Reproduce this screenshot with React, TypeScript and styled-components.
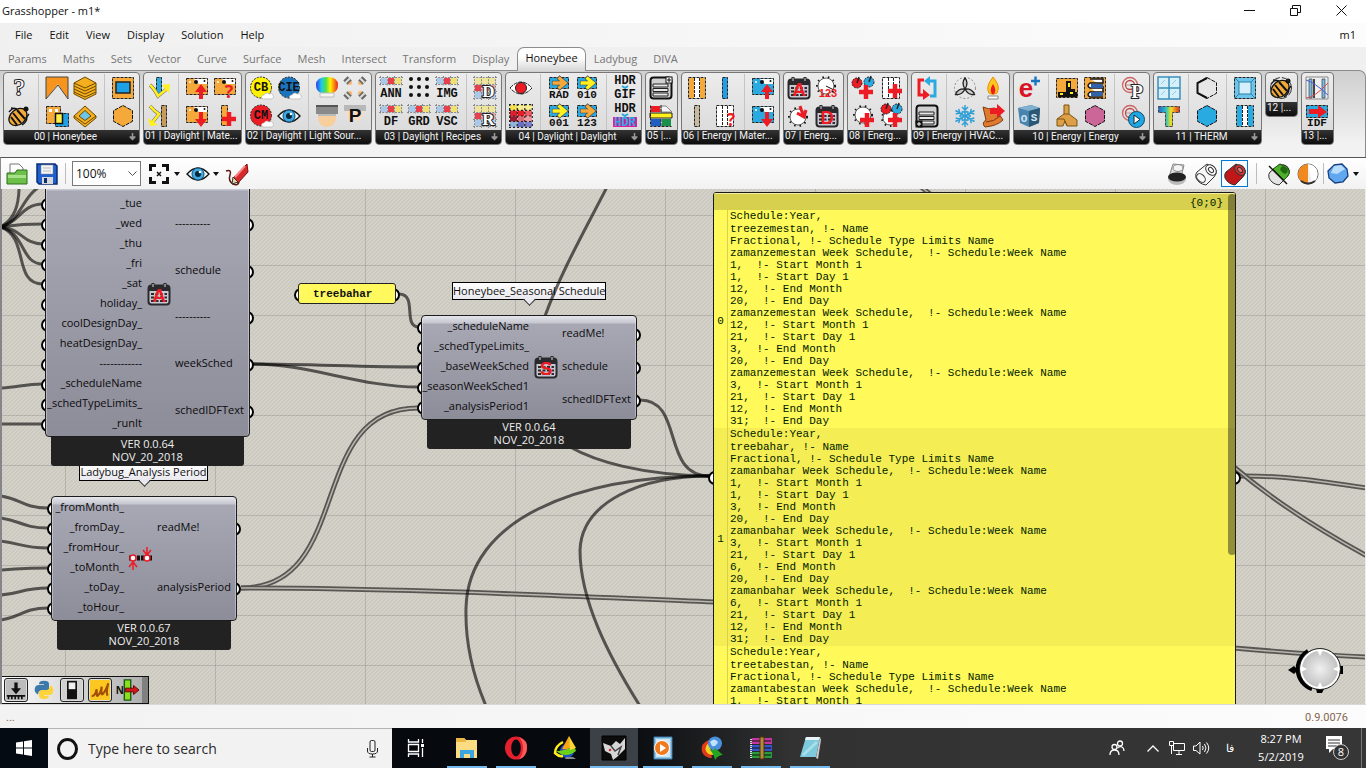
import React from "react";
import type { ReactNode } from "react";
import styled, { createGlobalStyle, css } from "styled-components";

const UI = `"Open Sans", "Noto Sans", sans-serif`;
const MONO = `"Liberation Mono", monospace`;

const Global = createGlobalStyle`
  * { box-sizing: border-box; }
  body { margin: 0; background: #f0f0f0; font-family: ${UI}; }
  button, select, input { font-family: inherit; margin: 0; padding: 0; border: 0; background: none; color: inherit; }
  button { cursor: default; }
  svg { display: block; flex: none; overflow: visible; }
`;

/* ---------- icon building blocks ---------- */

const dash = { stroke: "#222", strokeWidth: 1, strokeDasharray: "3 1" };

const Glyph = ({ size = 24, children }: { size?: number; children: ReactNode }) => (
  <svg width={size} height={size} viewBox="0 0 24 24" fill="none" aria-hidden="true">
    {children}
  </svg>
);

const Txt = ({ x = 12, y, s = 12, f = "#111", o, font = MONO, w = 700, children }: any) => (
  <text x={x} y={y} fontSize={s} fontWeight={w} fontFamily={font} textAnchor="middle" fill={f}
    stroke={o} strokeWidth={o ? 2 : 0} paintOrder="stroke">{children}</text>
);

const Film = ({ c, children }: { c: string; children?: ReactNode }) => (
  <>
    <rect x="1.5" y="2.5" width="21" height="16" fill={c} {...dash} />
    <path d="M9 3h13v5h-8l-3-2z" fill="#fff" />
    <circle cx="11" cy="6" r="2" fill="#111" />
    <circle cx="19.500" cy="5" r="1" fill="#111" />
    <circle cx="5" cy="6" r="1" fill="#fff" />
    {children}
  </>
);

const RedUp = () => <path d="M14 23v-7h-4l6-8 6 8h-4v7z" fill="#ed1c24" />;
const RedDown = () => <path d="M14 8v7h-4l6 8 6-8h-4V8z" fill="#ed1c24" />;
const Plus = ({ x = 16, y = 16 }) => (
  <path d={`M${x - 7} ${y}h14M${x} ${y - 7}v14`} stroke="#ed1c24" strokeWidth="4.500" />
);

const Gear = ({ x = 11, y = 12, r = 8 }) => (
  <>
    <circle cx={x} cy={y} r={r + 1} stroke="#111" strokeWidth="2" strokeDasharray="1.500 4" />
    <circle cx={x} cy={y} r={r} fill="#fff" stroke="#333" strokeWidth=".8" />
  </>
);

const Strip = () => (
  <>
    <rect x="2" y="2" width="6" height="6" fill="#a9c8ea" />
    <rect x="9" y="2" width="6" height="6" fill="#e8404a" />
    <rect x="16" y="2" width="6" height="6" fill="#f0e070" />
    <path d="M0 1.500h24M0 8.500h24M1.500 0v10M8.500 0v10M15.500 0v10M22.500 0v10" stroke="#888" strokeDasharray="2 1.200" />
  </>
);
const StripText = ({ t }: { t: string }) => <><Strip /><Txt y="21">{t}</Txt></>;

const Cal = ({ t }: { t: string }) => (
  <>
    <rect x="1.500" y="3.500" width="21" height="19" rx="3" fill="#c8c8d2" stroke="#2a2a2e" strokeWidth="2" />
    <path d="M2 4h20v5H2z" fill="#2a2a2e" />
    <path d="M6 1v5M18 1v5" stroke="#2a2a2e" strokeWidth="3" />
    <path d="M6 2v3M18 2v3" stroke="#ddd" />
    <path d="M4 12h16M4 15.500h16M4 19h16" stroke="#2a2a2e" strokeWidth="2" strokeDasharray="3 1.500" />
    <Txt y="20" s={19} f="#ed1c24" font={`"Liberation Sans", sans-serif`}>{t}</Txt>
  </>
);

const Mesh = ({ t }: { t: string }) => (
  <>
    <rect x="2" y="2" width="20" height="6" fill="#efe59a" />
    <rect x="2" y="9" width="6" height="6" fill="#e8404a" />
    <rect x="9" y="9" width="13" height="6" fill="#f0a0a0" />
    <rect x="2" y="16" width="20" height="6" fill="#a9c8ea" />
    <path d="M0 1.500h24M0 8.500h24M0 15.500h24M0 22.500h24M1.500 0v24M8.500 0v24M15.500 0v24M22.500 0v24" stroke="#888" strokeDasharray="2 1.200" />
    <Txt x="15.500" y="21" s={17} f="#fff" o="#222" font={`"Liberation Serif", serif`}>{t}</Txt>
  </>
);

const Arrow = ({ c, t }: { c: string; t: string }) => (
  <>
    <rect x="2.500" y="1.500" width="19" height="11" fill="#29abe2" {...dash} />
    <path d="M5 7h11M11 1l7 6-7 6" stroke="#444" strokeWidth="4.500" />
    <path d="M5.500 7h11M11.500 1.500l6.500 5.500-6.500 5.500" stroke={c} strokeWidth="3.400" />
    <Txt y="22" s={11}>{t}</Txt>
  </>
);

const Ball = ({ x, y, c }: { x: number; y: number; c: string }) => (
  <>
    <circle cx={x} cy={y} r="5" fill={c} stroke="#222" strokeDasharray="2 1" />
    <path d={`M${x} ${y}l2-6`} stroke="#222" strokeWidth="1.500" />
  </>
);

const Hex = ({ c, s = "#111" }: { c: string; s?: string }) => (
  <path d="M12 1.500l9.500 5.200v10.600l-9.500 5.200-9.500-5.200V6.700z" fill={c} stroke={s} strokeDasharray="4 1" />
);

const Badge = ({ c, t, tc = "#111" }: { c: string; t: string; tc?: string }) => (
  <>
    <circle cx="12" cy="11.500" r="10.500" fill={c} stroke="#222" strokeDasharray="2 1.200" />
    <Txt y="15" s={12} f={tc}>{t}</Txt>
    <path d="M14 23a2 2 0 0 1 1-4 3 3 0 0 1 5-1 2.500 2.500 0 0 1 3 5z" fill="#fff" stroke="#aaa" strokeWidth=".6" />
  </>
);

const Bee = ({ c = "#f0a838" }) => (
  <>
    <ellipse cx="11" cy="13" rx="10" ry="7.500" transform="rotate(-40 11 13)" fill={c} stroke="#111" strokeWidth="1.300" />
    <path d="M4 13l6 8M6 9l8 10M10 6l8 9" stroke="#111" strokeWidth="2" />
    <path d="M2 8q4-5 8-3M15 21q5-3 5-8M4 4l6 1M22 10l-3 4" stroke="#111" strokeWidth="1.300" />
    <circle cx="19" cy="5" r="2.500" fill="#111" />
  </>
);

const EyeBlue = () => (
  <>
    <path d="M1 12Q12 0 23 12 12 24 1 12z" fill="#e9f6fc" stroke="#111" strokeWidth="1.300" />
    <circle cx="12" cy="12" r="6" fill="#3fa9e0" stroke="#14527a" />
    <circle cx="12" cy="12" r="3" fill="#06283f" />
    <circle cx="14" cy="10" r="1.300" fill="#fff" />
  </>
);

const List = ({ low }: { low?: boolean }) => (
  <>
    <rect x="1.500" y="1.500" width="21" height="21" rx="3" fill="#d0d0d0" stroke="#111" strokeWidth="2" />
    <path d="M4 8h15v3H4zM4 12.500h15v3H4zM4 17h15v3H4z" fill="#e8e8e8" stroke="#222" />
    <rect x={low ? 1 : 17} y={low ? 17 : 1} width="6" height="6" fill={low ? "#111" : "#fff"} stroke="#111" />
    <path d={low ? "M4 18v4M2 20h4" : "M20 2v4M18 4h4"} stroke={low ? "#fff" : "#111"} />
  </>
);

const Bars = ({ a, b }: { a: string; b: string }) => (
  <>
    <rect x="3.500" y="1.500" width="17" height="21" fill={b} {...dash} />
    <rect x="4" y="2" width="5" height="20" fill={a} />
    <rect x="15" y="2" width="5" height="20" fill={a} />
    <path d="M9.500 2v20M14.500 2v20" {...dash} />
  </>
);

const Coil = () => (
  <>
    <circle cx="9" cy="9" r="7.500" stroke="#c66" strokeWidth="1.300" />
    <circle cx="9" cy="9" r="4.500" stroke="#b44" strokeWidth="1.300" />
    <path d="M5 9h9l3 6" stroke="#caa" strokeWidth="1.500" />
  </>
);

const icons: Record<string, ReactNode> = {
  help: <Txt y="19" s={24} w={400} f="#fff" o="#222" font={`"Liberation Serif", serif`}>?</Txt>,
  bee: <Bee />,
  roof: <><path d="M1 1h22v22L13 8 1 23z" fill="#f7941e" /><path d="M1 23L13 9l10 14z" fill="#e4e4e4" /><path d="M1 23V1h22v22L13 9z" stroke="#444" /></>,
  overlap: <><rect x="1.500" y="2.500" width="14" height="17" fill="#f5a93a" {...dash} /><path d="M4 5h3v3H4zM10 5h3v3h-3z" fill="#fff" /><rect x="10.500" y="9.500" width="13" height="13" fill="#1ea0e6" {...dash} /><rect x="10.500" y="9.500" width="7" height="10" fill="#fff04a" stroke="#111" strokeWidth="1.500" /></>,
  layers: <><path d="M1 7l11-6 11 6v11l-11 5.500L1 18z" fill="#f4ae1e" stroke="#6b4a00" /><path d="M1 7l11 5 11-5M1 10l11 5 11-5M1 13l11 5 11-5M1 16l11 5 11-5" stroke="#6b4a00" /></>,
  tile: <><path d="M1 12l11-10 11 10v2l-11 9-11-9z" fill="#f4ae1e" stroke="#6b4a00" /><path d="M1 12l11 8 11-8" stroke="#6b4a00" /><path d="M6 12l6-5.500 6 5.500-6 4.500z" fill="#6cc5ea" stroke="#6b4a00" /></>,
  frame: <><rect x="1.500" y="1.500" width="21" height="21" fill="#f5a93a" {...dash} /><rect x="5" y="6" width="14" height="11" fill="#1ea0e6" stroke="#222" strokeWidth="1.500" /></>,
  hexOrange: <Hex c="#f5a93a" />,
  rays: <><rect x="9.500" y="1.500" width="5" height="17" fill="#29abe2" {...dash} /><path d="M3 9q4 3 8 11l10-8" stroke="#666" strokeWidth="3.500" /><path d="M3 9q4 3 8 11l10-8" stroke="#fff01e" strokeWidth="2.600" /><path d="M15 9l8-1-1 9z" fill="#fff01e" /></>,
  bounce: <><rect x="14.500" y="1.500" width="5" height="21" fill="#c79a5b" {...dash} /><path d="M3 2q4 5 9 8L4 20" stroke="#666" strokeWidth="3.500" /><path d="M3 2q4 5 9 8L4 20" stroke="#fff01e" strokeWidth="2.600" /><path d="M1 14l2 8 8-1z" fill="#fff01e" /></>,
  filmUp: <Film c="#f5a93a"><RedUp /></Film>,
  filmDown: <Film c="#f5a93a"><RedDown /></Film>,
  filmAsk: <Film c="#f5a93a"><Txt x="16" y="22" s={18} f="#ed1c24" font={UI}>?</Txt></Film>,
  barPlus: <><rect x="8.500" y="1.500" width="6" height="20" fill="#f5a93a" {...dash} /><Plus x={16} y={15} /></>,
  cb: <Badge c="#fff200" t="CB" />,
  cm: <Badge c="#ed1c24" t="CM" />,
  cie: <Badge c="#1c75bc" t="CIE" />,
  eye: <EyeBlue />,
  rainbow: <><defs><linearGradient id="rb"><stop offset="0" stopColor="#2a3cf0" /><stop offset=".25" stopColor="#20c8e8" /><stop offset=".45" stopColor="#4be04b" /><stop offset=".65" stopColor="#fff200" /><stop offset="1" stopColor="#f01e1e" /></linearGradient></defs><path d="M1 9q0-8 11-8t11 8q0 6-5 8H6Q1 15 1 9z" fill="url(#rb)" /><path d="M5 17h14v4H5z" fill="#f4f4f4" stroke="#bbb" /></>,
  cap: <><path d="M1 1h22v9H1z" fill="#8a8a8a" /><path d="M1 1h22v2H1z" fill="#555" /><path d="M3 10h18v2H3z" fill="#bbb" /><path d="M3 12h18q0 11-9 11T3 12z" fill="#f8ce9c" /></>,
  spots: <>{[[6, 6, 45], [18, 6, 135], [6, 18, -45], [18, 18, 225]].map(([x, y, a]) => <g key={`${x}${y}`} transform={`translate(${x} ${y}) rotate(${a})`}><rect x="-5" y="-3" width="6" height="6" fill="#666" /><rect x="-3" y="-3" width="2" height="6" fill="#ddd" /><path d="M1-3q5 3 0 6z" fill="#f9b872" /></g>)}</>,
  lampP: <><path d="M1 1h22v6H1z" fill="#b8b8b8" /><path d="M3 7h18q-1 10-9 10T3 7z" fill="#f8dcc0" /><Txt x="12" y="18" s={19} font={`"Liberation Sans", sans-serif`}>P</Txt></>,
  ann: <StripText t="ANN" />, df: <StripText t="DF" />, grd: <StripText t="GRD" />, img: <StripText t="IMG" />, vsc: <StripText t="VSC" />,
  dots: <>{[3, 11, 19].map((y) => [4, 12, 20].map((x) => <circle key={`${x}${y}`} cx={x} cy={y} r="2" fill="#111" />))}</>,
  meshD: <Mesh t="D" />, meshR: <Mesh t="R" />,
  redEye: <><path d="M1 12Q12 0 23 12 12 24 1 12z" fill="#fff" stroke="#222" strokeDasharray="4 1" /><circle cx="12" cy="12" r="5.500" fill="#ed1c24" stroke="#222" /></>,
  grid: <>{["#f3e04a", "#f6ee8c", "#f6ee8c", "#e01e2c", "#ed1c24", "#ee5a62", "#a01830", "#e06a74", "#f09aa0", "#8fb4e0", "#6a70c0", "#7a80cc"].map((c, i) => <rect key={i} x={1 + (i % 3) * 7.5} y={1 + Math.floor(i / 3) * 5.6} width="7" height="5.400" fill={c} />)}<path d="M.700 0v24M8.300 0v24M15.800 0v24M23.300 0v24M0 .700h24M0 6.300h24M0 12h24M0 17.500h24M0 23.300h24" stroke="#222" strokeDasharray="2 2" strokeWidth="1.200" /></>,
  rad: <Arrow c="#f5a93a" t="RAD" />, n001: <Arrow c="#fff01e" t="001" />, n010: <Arrow c="#fff01e" t="010" />, n123: <Arrow c="#f5a93a" t="123" />,
  hdrGif: <><Txt y="8" s={12}>HDR</Txt><path d="M9 10l3 2 3-2" stroke="#29abe2" strokeWidth="2" /><Txt y="22" s={12}>GIF</Txt></>,
  hdrHdr: <><Txt y="8" s={12}>HDR</Txt><path d="M9 10l3 2 3-2" stroke="#29abe2" strokeWidth="2" /><path d="M0 13h24v10H0z" fill="#d6249c" /><Txt y="22" s={12} f="#29abe2">HDR</Txt></>,
  list: <List />,
  listPlus: <List low />,
  blocks: <><path d="M2 2h9v6H2z" fill="#ed1c24" /><path d="M12 2h5l6 6H12z" fill="#f4f4f4" stroke="#888" /><path d="M1 9h22v5H1z" fill="#fff01e" stroke="#222" /><path d="M2 15h10v7H2z" fill="#1c5fc0" /><path d="M13 15h9v7h-9z" fill="#18904a" /><path d="M1.500 1.500v21h21M12 1v7M12 15v7" {...dash} /></>,
  wall: <Bars a="#f5a93a" b="#fff" />,
  tanBar: <rect x="9.500" y="1.500" width="5" height="21" fill="#c8ba9c" {...dash} />,
  blueBar: <rect x="9.500" y="1.500" width="5" height="21" fill="#1ea0e6" {...dash} />,
  wallAsk: <><Bars a="#fff" b="#fff" /><Txt x="18" y="22" s={17} f="#ed1c24" font={UI}>?</Txt></>,
  blueUp: <Film c="#29abe2"><RedUp /></Film>,
  blueDown: <Film c="#29abe2"><RedDown /></Film>,
  calA: <Cal t="A" />, calD: <Cal t="D" />, calS: <Cal t="S" />,
  gearNum: <><Gear y={10} /><path d="M11 10l8 4" stroke="#111" /><Txt x="13" y="21" s={11} f="#ed1c24" font={`"Liberation Sans", sans-serif`}>123</Txt></>,
  gearDown: <><Gear y={13} /><path d="M13 2l3 9M10 9l7 4 2-7" stroke="#ed1c24" strokeWidth="3" /></>,
  balls: <><Ball x={6} y={7} c="#ed1c24" /><Ball x={18} y={6} c="#29abe2" /><Plus x={15} y={16} /></>,
  gearPlus: <><Gear x={12} y={11} r={8} /><Plus x={16} y={16} /></>,
  wallPlus: <><Bars a="#fff" b="#fff" /><Plus x={16} y={15} /></>,
  ballsGear: <><Gear x={11} y={14} r={7} /><Ball x={7} y={5} c="#ed1c24" /><Ball x={18} y={5} c="#29abe2" /><Plus x={16} y={16} /></>,
  cycle: <><path d="M9 4H4v15h6" stroke="#ed1c24" strokeWidth="3" /><path d="M8 13l7 6-7 5z" fill="#ed1c24" /><path d="M15 20h5V5h-5" stroke="#29abe2" strokeWidth="3" /><path d="M15 0v10L9 5z" fill="#29abe2" /></>,
  fan: <><circle cx="12" cy="12" r="10.500" stroke="#888" strokeDasharray="2 2" />{[0, 120, 240].map((a) => <path key={a} d="M12 13q-4-6 0-11 4 5 0 11z" transform={`rotate(${a} 12 13)`} fill="#ccc" stroke="#222" strokeWidth="1.300" />)}</>,
  snow: <>{[0, 60, 120].map((a) => <path key={a} d="M12 1v22M9 3l3 3 3-3M9 21l3-3 3 3M9.500 7l2.500 2 2.500-2M9.500 17l2.500-2 2.500 2" transform={`rotate(${a} 12 12)`} stroke="#2f9fd6" strokeWidth="1.500" />)}</>,
  flame: <><path d="M12 1q8 9 4 16-4 3-8 0Q4 11 12 1z" fill="#fdc81e" stroke="#f08a00" /><path d="M12 8q4 6 1 10h-2q-3-4 1-10z" fill="#ed1c24" /><path d="M7 20h10v3H7z" fill="#fff" stroke="#888" /></>,
  roll: <><path d="M2 3q5 3 12 1l8 12q-6 6-18 7-4-4 1-7z" fill="#e07a2e" stroke="#7a3a10" /><path d="M5 18q8 0 14-6" stroke="#7a3a10" /><path d="M9 4h7V0l8 7-8 7v-4H9z" fill="#ed1c24" /></>,
  eplus: <><Txt x="9" y="21" s={26} f="#d81424" font={`"Liberation Sans", sans-serif`}>e</Txt><path d="M14 5h9M18.500.500v9" stroke="#1c75bc" strokeWidth="2.400" /></>,
  cube: <><path d="M1 4l13-3 9 3-1 15-10 4-9-4z" fill="#4a84ae" /><path d="M1 4l11 3 11-3-9-3z" fill="#7fb0d0" /><path d="M12 7v16l10-4 1-15z" fill="#2b5674" /><Txt x="7" y="18" s={11} f="#cfe6f4">O</Txt><Txt x="17" y="17" s={11} f="#cfe6f4">S</Txt></>,
  factory: <><path d="M1.500 2.500h21v19h-21z" fill="#f5a93a" {...dash} /><path d="M3 21v-5h8V5h5v8h4v3h2v5z" fill="#111" /><path d="M5 17h3v2H5zM13 7h2v4h-2zM15 16h3v2h-3z" fill="#fff01e" /></>,
  duct: <><path d="M9 1h5v9l8 6v6H12l-2-5-2 5H2v-7l7-5z" fill="#dea047" stroke="#7a5412" /><path d="M2 15h7l3 7M9 10h5" stroke="#7a5412" /></>,
  books: <><path d="M1.500 1.500h21v21h-21z" fill="#f5a93a" {...dash} /><path d="M7 3h13v4H7q-4 3 0 5h13v-2M7 12h13v4H7q-4 3 0 5h13" fill="#fff" stroke="#111" strokeWidth="1.500" /><path d="M8 8h12v4H8zM8 16h12v4H8z" fill="#2f62a8" /></>,
  hexPink: <Hex c="#cc6699" />,
  coilP: <><Coil /><Txt x="16" y="22" s={19} f="#fff" o="#222" font={`"Liberation Serif", serif`}>P</Txt></>,
  coilPlay: <><Coil /><circle cx="15.500" cy="15.500" r="8" fill="#1ea8e6" stroke="#114a66" /><path d="M13 11l6 4.500-6 4.500z" fill="#fff" stroke="#222" /></>,
  window: <><path d="M1 1h22v22H1z" fill="#d6f0fb" stroke="#3b8fb8" strokeWidth="1.500" /><path d="M12 1v22M1 12h22" stroke="#3b8fb8" strokeWidth="1.500" /><path d="M4 8l4-4M15 8l4-4M4 19l4-4M15 19l4-4" stroke="#8fcbe6" /></>,
  tee: <><defs><linearGradient id="tg"><stop offset="0" stopColor="#2a5fd0" /><stop offset=".35" stopColor="#27c0c0" /><stop offset=".6" stopColor="#f0e020" /><stop offset="1" stopColor="#e03020" /></linearGradient></defs><path d="M1.500 2.500h21v6h-7v14h-7v-14h-7z" fill="url(#tg)" stroke="#444" strokeDasharray="3 1" /></>,
  hexLine: <><Hex c="#e6e6e6" /><path d="M12 22L2.500 17V7L12 2" stroke="#111" strokeWidth="2" /></>,
  hexBlue: <Hex c="#29abe2" />,
  pane: <><rect x="1.500" y="1.500" width="21" height="21" fill="#6cc5ea" {...dash} /><path d="M6 6h12v12H6z" fill="#d6f0fb" stroke="#2b7fa8" /><path d="M2 2l4 4M22 2l-4 4M2 22l4-4M22 22l-4-4" stroke="#2b7fa8" /></>,
  blueBars: <Bars a="#29abe2" b="#fff" />,
  beeRing: <><Bee /><circle cx="12" cy="12" r="10.500" stroke="#333" strokeDasharray="8 2" /></>,
  chart: <><path d="M1 1h22v22H1z" fill="#eee" stroke="#888" /><path d="M4 3h3v19H4zM17 3h3v19h-3z" fill="#7db8dc" stroke="#345" strokeWidth=".7" /><path d="M8 3h2v19H8z" fill="#444" /><path d="M1 22q8 0 22-15" stroke="#d84a4a" /><path d="M1 4q8 2 22 15" stroke="#4a5ad8" /></>,
  idf: <><rect x="1.500" y="1.500" width="21" height="12" fill="#29abe2" {...dash} /><path d="M4 5h9V1l9 7-9 6v-4H4z" fill="#ed1c24" /><Txt y="22" s={11} w={700}>IDF</Txt></>,
};

/* ---------- window chrome ---------- */

const Page = styled.div`
  display: flex;
  flex-direction: column;
  min-height: 100vh;
  font-size: 11px;
  color: #111;
`;

const TitleBar = styled.header`
  display: flex;
  align-items: center;
  justify-content: space-between;
  height: 23px;
  padding-left: 2px;
  padding-bottom: 2px;
  background: #fff;
  h1 { margin: 0; font-size: 11px; font-weight: 400; }
`;
const WinButtons = styled.div`display: flex; padding-right: 2px;`;
const WinButton = styled.button`
  display: flex;
  align-items: center;
  justify-content: center;
  width: 46px;
  height: 21px;
`;

const MenuBar = styled.nav`
  display: flex;
  align-items: center;
  height: 24px;
  padding: 0 10px 2px 7px;
  background: linear-gradient(90deg, #f0f0f0, #fcfcfc);
`;
const MenuButton = styled.button`
  padding: 0 9px 0 8px;
  font-size: 11px;
  &:last-child { margin-left: auto; padding: 0; }
`;

const TabBar = styled.div`
  display: flex;
  align-items: stretch;
  height: 23px;
  background: #f0f0f0;
`;
const Tab = styled.button<{ $active?: boolean }>`
  position: relative;
  z-index: 1;
  height: 24px;
  padding: 0 8px 1px;
  font-size: 11px;
  color: #767676;
  ${(p) => p.$active && css`
    color: #111;
    padding: 0 7px 4px;
    border: 1px solid #8c8c8c;
    border-bottom: 0;
    border-radius: 7px 7px 0 0;
    background: linear-gradient(#fff 40%, #d6d6d6);
  `}
`;

const Ribbon = styled.section`
  display: flex;
  align-items: flex-start;
  gap: 3px;
  height: 87px;
  padding: 1px 3px 0;
  border-top: 1px solid #8c8c8c;
  border-right: 1px solid #8c8c8c;
  border-top-right-radius: 7px;
  background: linear-gradient(#cfcfcf, #f2f2f2 85%);
`;
const Group = styled.section`
  flex: none;
  border: 1px solid #777;
  border-radius: 4px;
  overflow: hidden;
  background: linear-gradient(#ececec, #d8d8d8);
`;
const GroupIcons = styled.div`
  display: flex;
  padding: 1px 2px 0 1px;
`;
const Cells = styled.div<{ $rows: number }>`
  display: grid;
  grid-auto-flow: column;
  grid-template-rows: repeat(${(p) => p.$rows}, 28px);
  grid-auto-columns: 28px;
  & + & {
    margin-left: 5px;
    padding-left: 4px;
    border-left: 1px solid #c4c4c4;
  }
`;
const Cell = styled.button`
  display: flex;
  align-items: center;
  justify-content: center;
`;
const GroupLabel = styled.h2<{ $cut?: boolean }>`
  display: flex;
  align-items: center;
  width: 0;
  min-width: 100%;
  height: 14px;
  margin: 0;
  padding: ${(p) => (p.$cut ? "0 0 2px 1px" : "0")};
  font: 400 10px/12px Roboto, sans-serif;
  white-space: nowrap;
  color: #f4f4f4;
  background: linear-gradient(#333, #0c0c0c);
  span { flex: ${(p) => (p.$cut ? "none" : 1)}; text-align: center; }
`;

type GroupDef = { label: string; cut?: boolean; rows?: number; sections: string[][] };
const groups: GroupDef[] = [
  { label: "00 | Honeybee", sections: [["help", "bee"], ["roof", "overlap", "layers", "tile"], ["frame", "hexOrange"]] },
  { label: "01 | Daylight | Mate...", cut: true, sections: [["rays", "bounce"], ["filmUp", "filmDown", "filmAsk", "barPlus"]] },
  { label: "02 | Daylight | Light Sour...", cut: true, sections: [["cb", "cm", "cie", "eye"], ["rainbow", "cap", "spots", "lampP"]] },
  { label: "03 | Daylight | Recipes", sections: [["ann", "df", "dots", "grd", "img", "vsc"], ["meshD", "meshR"]] },
  { label: "04 | Daylight | Daylight", sections: [["redEye", "grid"], ["rad", "n001", "n010", "n123"], ["hdrGif", "hdrHdr"]] },
  { label: "05 |...", cut: true, sections: [["list", "blocks"]] },
  { label: "06 | Energy | Mater...", cut: true, sections: [["wall", "tanBar", "blueBar", "wallAsk"], ["blueUp", "blueDown"]] },
  { label: "07 | Energ...", cut: true, sections: [["calA", "gearDown", "gearNum", "calD"]] },
  { label: "08 | Energ...", cut: true, sections: [["balls", "gearPlus", "wallPlus", "ballsGear"]] },
  { label: "09 | Energy | HVAC...", cut: true, sections: [["cycle", "listPlus"], ["fan", "snow", "flame", "roll"]] },
  { label: "10 | Energy | Energy", sections: [["eplus", "cube"], ["factory", "duct", "books", "hexPink"], ["coilP", "coilPlay"]] },
  { label: "11 | THERM", sections: [["window", "tee"], ["hexLine", "hexBlue"], ["pane", "blueBars"]] },
  { label: "12 |...", cut: true, rows: 1, sections: [["beeRing"]] },
  { label: "13 |...", cut: true, sections: [["chart", "idf"]] },
];

const RibbonGroup = ({ g }: { g: GroupDef }) => (
  <Group>
    <GroupIcons>
      {g.sections.map((s, i) => (
        <Cells key={i} $rows={g.rows ?? 2}>
          {s.map((n) => <Cell key={n} aria-label={n}><Glyph>{icons[n]}</Glyph></Cell>)}
        </Cells>
      ))}
    </GroupIcons>
    <GroupLabel $cut={g.cut}>
      <span>{g.label}</span>
      {!g.cut && (
        <svg width="12" height="14" viewBox="0 0 12 14" fill="none" aria-hidden="true">
          <path d="M5.500 3v7M2.500 7h6M3.500 7.500l2 2 2-2" stroke="#999" strokeWidth="1.500" />
        </svg>
      )}
    </GroupLabel>
  </Group>
);

/* ---------- canvas toolbar ---------- */

const ToolBar = styled.div`
  display: flex;
  align-items: center;
  justify-content: space-between;
  height: 32px;
  padding: 0 7px 0 4px;
  border-top: 1px solid #555;
  border-left: 1px solid #8c8c8c;
  background: linear-gradient(#fff, #f2f2f2);
`;
const ToolGroup = styled.div<{ $gap: number }>`
  display: flex;
  align-items: center;
  gap: ${(p) => p.$gap}px;
`;
const ToolButton = styled.button<{ $w?: number; $active?: boolean }>`
  display: flex;
  align-items: center;
  justify-content: center;
  width: ${(p) => p.$w ?? 24}px;
  height: 27px;
  ${(p) => p.$active && css`border: 1px solid #0078d7; background: #f8fbff;`}
`;
const Divider = styled.span<{ $m?: number }>`
  width: 1px;
  height: 21px;
  margin: 0 ${(p) => p.$m ?? 0}px;
  background: #bdbdbd;
`;
const ZoomBox = styled.label`
  position: relative;
  display: flex;
  align-items: center;
  width: 69px;
  height: 25px;
  border: 1px solid #7a7a7a;
  background: #fff;
  select { appearance: none; width: 100%; height: 100%; padding-left: 3px; font-size: 12px; outline: 0; }
  svg { position: absolute; right: 3px; pointer-events: none; }
`;
const Caret = () => <svg width="6" height="4" viewBox="0 0 6 4" aria-hidden="true"><path d="M0 0h6L3 4z" fill="#111" /></svg>;
const Drop = styled.button`display: flex; align-items: center; gap: 3px; height: 27px;`;

const Cylinder = ({ a, b }: { a: string; b: string }) => (
  <g>
    <path d="M13 2l9 6q1 4-2 7l-8 8q-7-1-10-7-1-4 1-6z" fill={a} stroke="#333" />
    <ellipse cx="17" cy="8" rx="6" ry="4.500" transform="rotate(45 17 8)" fill={b} stroke="#333" />
    <ellipse cx="17" cy="8" rx="3" ry="2" transform="rotate(45 17 8)" fill="#fff" fillOpacity=".3" stroke="#333" />
  </g>
);

/* ---------- canvas ---------- */

const Canvas = styled.main`
  position: relative;
  flex: 1;
  min-height: 400px;
  overflow: hidden;
  border-left: 2px solid #86868a;
  border-right: 1px solid #eee;
  background:
    linear-gradient(rgba(0, 0, 0, 0.13) 1px, transparent 1px) 0 26px / 100% 50px,
    linear-gradient(90deg, rgba(0, 0, 0, 0.13) 1px, transparent 1px) 63px 0 / 150px 100%,
    linear-gradient(135deg, #ccc9c1 0 25%, #d4d1c9 25% 50%, #ccc9c1 50% 75%, #d4d1c9 75%) 0 0 / 4px 4px;
`;
const WireLayer = styled.svg`
  position: absolute;
  inset: 0;
  width: 100%;
  height: 100%;
`;
const grip = css`
  content: "";
  position: absolute;
  z-index: -1;
  width: 10px;
  height: 10px;
  border: 2px solid #000;
  border-radius: 50%;
  background: #fff;
`;
const Node = styled.article<{ $x: number; $y: number; $w: number }>`
  position: absolute;
  left: ${(p) => p.$x}px;
  top: ${(p) => p.$y}px;
  width: ${(p) => p.$w}px;
  isolation: isolate;
  color: #0b0b0b;
`;
const NodeBody = styled.div<{ $bleed?: boolean }>`
  display: flex;
  align-items: flex-end;
  padding: ${(p) => (p.$bleed ? 11 : 1)}px 0 2px;
  border: 1px solid #1c1c1c;
  border-radius: 4px;
  background: linear-gradient(#e6e6ec 0, #c6c6d0 7px, #a8a8b5 8px, #8d8c99);
  box-shadow: inset 1px 0 rgba(255, 255, 255, 0.35), inset -1px 0 rgba(255, 255, 255, 0.35);
`;
const Inputs = styled.ul<{ $w: number }>`
  width: ${(p) => p.$w}px;
  margin: 0;
  padding: 0;
  list-style: none;
  text-align: right;
  white-space: nowrap;
  li { position: relative; display: flex; align-items: center; justify-content: flex-end; height: 20px; padding-bottom: 4px; }
  li::before { ${grip} left: -5px; top: 4px; }
`;
const Outputs = styled.ul<{ $h: number }>`
  display: flex;
  flex-direction: column;
  flex: 1;
  height: ${(p) => p.$h}px;
  margin: 0;
  padding: 0;
  list-style: none;
  li { position: relative; display: flex; flex: 1; align-items: center; padding-bottom: 3px; }
  li::after { ${grip} right: -5px; top: calc(50% - 6px); }
`;
const NodeIcon = styled.div<{ $bleed?: boolean }>`
  display: flex;
  align-self: center;
  justify-content: center;
  width: 33px;
  padding-bottom: ${(p) => (p.$bleed ? 40 : 0)}px;
`;
const NodeFooter = styled.footer`
  margin: 0 6px;
  padding: 0 0 2px;
  border-radius: 0 0 3px 3px;
  background: #222;
  color: #eee;
  text-align: center;
  line-height: 14px;
  p { margin: 0; }
  p:first-child { line-height: 13px; }
`;
const Tag = styled.div<{ $x: number; $y: number; $w: number }>`
  position: absolute;
  left: ${(p) => p.$x}px;
  top: ${(p) => p.$y}px;
  width: ${(p) => p.$w}px;
  height: 18px;
  border: 1px solid #000;
  background: linear-gradient(#fff, #e8e8ee);
  line-height: 15px;
  text-align: center;
  white-space: nowrap;
  &::after {
    content: "";
    position: absolute;
    left: 50%;
    bottom: -5px;
    width: 8px;
    height: 8px;
    margin-left: -4px;
    border: solid #333;
    border-width: 0 1px 1px 0;
    background: linear-gradient(135deg, transparent 50%, #e8e8ee 50%);
    transform: rotate(45deg);
  }
`;

type NodeProps = {
  x: number; y: number; w: number; inW: number; outH: number; icon: ReactNode;
  inputs: string[]; outputs: string[]; version: string; bleed?: boolean;
};
const Component = ({ x, y, w, inW, outH, icon, inputs, outputs, version, bleed }: NodeProps) => (
  <Node $x={x} $y={y} $w={w}>
    <NodeBody $bleed={bleed}>
      <Inputs $w={inW}>{inputs.map((t) => <li key={t}>{t}</li>)}</Inputs>
      <NodeIcon $bleed={bleed}><Glyph>{icon}</Glyph></NodeIcon>
      <Outputs $h={outH}>{outputs.map((t, i) => <li key={i}>{t}</li>)}</Outputs>
    </NodeBody>
    <NodeFooter><p>{version}</p><p>NOV_20_2018</p></NodeFooter>
  </Node>
);

const PeriodIcon = (
  <>
    <path d="M0 12h24" stroke="#111" strokeWidth="5" strokeDasharray="3 1" />
    <circle cx="4" cy="12" r="3" fill="#fff" stroke="#ed1c24" strokeWidth="1.500" />
    <circle cx="18" cy="12" r="3" fill="#fff" stroke="#ed1c24" strokeWidth="1.500" />
    <path d="M4 24v-7M0 21l4-5 4 5M18 1v7M14 4l4 5 4-5" stroke="#ed1c24" strokeWidth="1.500" />
  </>
);

const NamePanel = styled.div`
  position: absolute;
  left: 296px;
  top: 94px;
  width: 98px;
  height: 21px;
  isolation: isolate;
  font: 700 11px/21px ${MONO};
  p { margin: 0; padding-left: 14px; height: 21px; line-height: 20px; border: 1px solid #222; border-radius: 3px; background: #fff95e; }
  &::before { ${grip} left: -4px; top: 5px; }
  &::after { ${grip} right: -4px; top: 5px; }
`;

const DataPanel = styled.section`
  position: absolute;
  left: 711px;
  top: 3px;
  bottom: -6px;
  width: 523px;
  isolation: isolate;
  font: 11px/12px ${MONO};
  color: #002000;
  &::before { ${grip} left: -5px; top: 279px; }
  &::after { ${grip} right: -5px; top: 279px; }
`;
const PanelSheet = styled.div`
  height: 100%;
  overflow: hidden;
  border: 1px solid #1a1a1a;
  border-radius: 3px;
  background: #fff95a;
`;
const PanelHead = styled.header`
  height: 17px;
  padding: 3px 12px 0 0;
  border-top: 1px solid #f4f0a0;
  background: #d6d04e;
  text-align: right;
`;
const Branch = styled.div<{ $alt?: boolean }>`
  display: flex;
  background: ${(p) => (p.$alt ? "#f4ee54" : "#fff95a")};
`;
const BranchIndex = styled.span`
  display: flex;
  align-items: center;
  justify-content: center;
  width: 14px;
  padding-top: 3px;
  border-right: 1px solid #d6d04e;
`;
const Lines = styled.div`
  padding: 0 0 1px 2px;
  white-space: pre;
  p { margin: 0; }
  p:first-child { margin-bottom: 1px; }
`;
const PanelScroll = styled.span`
  position: absolute;
  right: 0;
  top: 2px;
  width: 8px;
  height: 361px;
  border-radius: 4px;
  background: rgba(40, 40, 30, 0.48);
`;

const year = (name: string, weeks: string[][]) => [
  "Schedule:Year,",
  `tree${name}, !- Name`,
  "Fractional, !- Schedule Type Limits Name",
  ...weeks.flatMap((w) => [
    `zaman${name} Week Schedule,  !- Schedule:Week Name`,
    ...w.map((v, i) => `${v}  !- ${["Start Month 1", "Start Day 1", "End Month", "End Day"][i]}`),
  ]),
];
const branches = [
  { index: "0", lines: year("zemestan", [["1,", "1,", "12,", "20,"], ["12,", "21,", "3,", "20,"], ["3,", "21,", "12,", "31;"]]) },
  { index: "1", lines: year("bahar", [["1,", "1,", "3,", "20,"], ["3,", "21,", "6,", "20,"], ["6,", "21,", "12,", "31;"]]) },
  { index: "", lines: year("tabestan", [["1,"]]) },
];

const singleWires = [
  "M0 227 C14 220 20 206 19 180", "M0 227 C22 222 20 196 44 184",
  "M0 227 C20 222 22 204 43 204", "M0 227 C15 225 20 224 43 224", "M0 227 C22 228 22 244 43 244",
  "M0 227 C26 232 20 264 43 264", "M0 227 C30 236 12 284 43 284",
  "M0 388 C15 388 25 384 42 384", "M0 424 H42",
  "M0 496 C20 498 22 508 48 508", "M0 518 C20 520 22 528 48 528", "M0 541 C20 543 22 548 48 548",
  "M0 570 C20 569 22 568 48 568", "M0 595 C20 594 22 588 48 588", "M0 620 C20 618 22 608 48 608",
  "M253 364 C310 364 360 367 418 367", "M253 364 C310 364 360 387 418 387",
  "M399 294 C418 294 402 327 419 327",
  "M607 187 C584 232 562 270 545 316", "M570 447 C595 461 640 475 710 476",
  "M640 400 C685 400 660 476 710 476",
  "M710 476 C575 476 468 520 466 608 C465 645 474 678 486 706",
  "M710 476 C640 476 582 502 580 550 C580 600 608 655 640 706",
];
const doubleWires = [
  "M241 588 C355 588 305 408 418 408", "M241 588 C400 588 560 596 715 602",
  "M1236 476 C1280 475 1320 481 1367 488", "M1234 467 C1262 491 1305 522 1367 556",
  "M1234 648 C1280 652 1320 655 1367 657", "M920 186 L930 194",
];

const Wires = () => (
  <WireLayer aria-hidden="true">
    <g transform="translate(-2 -189)" fill="none">
      {doubleWires.map((d) => (
        <g key={d}>
          <path d={d} stroke="#575652" strokeWidth="5" />
          <path d={d} stroke="#b9b6af" strokeWidth="1.500" />
        </g>
      ))}
      {singleWires.map((d) => <path key={d} d={d} stroke="#000" strokeOpacity=".6" strokeWidth="3" />)}
    </g>
  </WireLayer>
);

const Compass = styled.svg`position: absolute; right: 21px; bottom: 11px;`;

const Palette = styled.div`
  position: absolute;
  left: 0;
  bottom: 0;
  display: flex;
  gap: 4px;
  height: 28px;
  width: 147px;
  padding: 1px 2px;
  border: 1px solid #111;
  border-left: 0;
  background: linear-gradient(90deg, #fff, #b0b0b0 96%, #808080 96%);
`;
const PaletteButton = styled.button<{ $tone?: string }>`
  display: flex;
  align-items: center;
  justify-content: center;
  width: 24px;
  height: 24px;
  border-radius: 3px;
  ${(p) => p.$tone && css`border: 1px solid #222; background: ${p.$tone}; box-shadow: inset 0 0 0 1px #ddd;`}
`;

const StatusBar = styled.div`
  display: flex;
  align-items: center;
  justify-content: space-between;
  height: 24px;
  padding: 3px 18px 0 6px;
  border-top: 1px solid #d8d8d8;
  background: linear-gradient(90deg, #f2f2f2, #fcfcfc);
  color: #86644c;
  font: 11px/16px Roboto, sans-serif;
`;

/* ---------- taskbar ---------- */

const TaskBar = styled.footer`
  display: flex;
  height: 40px;
  background: linear-gradient(90deg, #050b12 0, #06090d 45%, #323232 58%, #363636);
  color: #fff;
`;
const StartButton = styled.button`display: flex; align-items: center; justify-content: center; width: 48px;`;
const Search = styled.label`
  display: flex;
  align-items: center;
  gap: 9px;
  flex: 0 1 344px;
  padding: 0 12px 0 8px;
  border-top: 1px solid #b4b4b4;
  background: #f2f2f2;
  input { flex: 1; min-width: 0; font-size: 14px; color: #222; outline: 0; }
  input::placeholder { color: #2b2b2b; opacity: 1; }
`;
const Apps = styled.div`display: flex; gap: 1px; margin-left: 3px;`;
const AppButton = styled.button<{ $line?: boolean; $active?: boolean }>`
  display: flex;
  align-items: center;
  justify-content: center;
  width: 48px;
  ${(p) => p.$line && css`
    background: linear-gradient(#76b9ed, #76b9ed) 50% 100% / 40px 2px no-repeat;
  `}
  ${(p) => p.$active && css`
    background: linear-gradient(#76b9ed, #76b9ed) 50% 100% / 48px 2px no-repeat, #3c4148;
  `}
`;
const Tray = styled.div`display: flex; margin-left: auto;`;
const TrayButton = styled.button<{ $w: number }>`
  display: flex;
  flex-direction: column;
  align-items: center;
  justify-content: center;
  width: ${(p) => p.$w}px;
  font-size: 11px;
  line-height: 18px;
  white-space: nowrap;
  &:last-child { border-left: 1px solid #777; }
`;

const apps: { name: string; line?: boolean; active?: boolean; art: ReactNode }[] = [
  { name: "Files", line: true, art: <><path d="M1 2h8l2 2h11v18H1z" fill="#fbdc83" /><path d="M1 2h8l2 2v2H1z" fill="#e9b944" /><path d="M5 22v-8h14v8h-4v-4H9v4z" fill="#3aa5e0" /></> },
  { name: "Opera", line: true, art: <><ellipse cx="12" cy="12" rx="11" ry="11.500" fill="#e3202c" /><path d="M15 1q9 3 8 12-1 8-8 10.500 4-5 4-11.500T15 1z" fill="#ff5a5a" /><ellipse cx="12" cy="12" rx="4.800" ry="8.500" fill="#070b10" /></> },
  { name: "Sail", art: <><circle cx="14" cy="15" r="7" fill="#1f4fc8" /><path d="M3 15q10 8 20 0-1-4-4-4-8 4-16 4z" fill="#6cd016" /><path d="M16 0L9 13q6 1 9-2z" fill="#f7a416" /><path d="M16 0l7 12-6 2z" fill="#ffd633" /><path d="M10 6q-8 4-8 11 4 4 8 3" stroke="#fff01e" strokeWidth="2.500" /><path d="M12 23h11l-3-2h-7z" fill="#888" /></> },
  { name: "Rhino", active: true, art: <><path d="M0 0h24v24H0z" fill="#0c0c0c" stroke="#000" /><path d="M1 7l8 3 5-5 4 3 5-6v11l-8 8-4 3-2-6-6-3z" fill="#d6d6d6" /><path d="M9 10l4 5 6-4-3 8" stroke="#444" strokeWidth="1.500" /><circle cx="8" cy="14" r="1.300" fill="#c33" /></> },
  { name: "Player", line: true, art: <><path d="M3 1h18v22H3z" fill="#8fc7ea" stroke="#3f7aa8" /><path d="M5 3h14v18H5z" fill="#cfe7f6" /><circle cx="11" cy="12" r="7.500" fill="#f07a1e" stroke="#fff" /><path d="M9 8l6 4-6 4z" fill="#fff" /></> },
  { name: "Download", line: true, art: <><path d="M9 4q-9 3-7 12 3 6 10 6l-1-4q-7-4 0-10z" fill="#e03a1e" /><path d="M10 6q-6 4-4 9 2 4 7 4v-4q-5-2-1-7z" fill="#f5d21e" /><circle cx="15" cy="7.500" r="7" fill="#4a8fdc" /><path d="M10 6q4-5 8 0-2 5-6 4z" fill="#bfe3ff" /><path d="M9 13q5 3 6-1l8 7q-5 0-8 5-1-6-6-11z" fill="#25a322" /></> },
  { name: "Archive", line: true, art: <><path d="M3 2h20v6H1z" fill="#c0389c" /><path d="M1 9h22v6H1z" fill="#3355c8" /><path d="M1 16h22v6H3z" fill="#2a9a3a" /><path d="M1 5h21M1 12h21M1 19h21" stroke="#111" /><path d="M2 3v19" stroke="#ddd" strokeWidth="2" strokeDasharray="1 1" /><path d="M11 1h4v22h-4z" fill="#b58a3a" stroke="#4a3208" /></> },
  { name: "Notes", line: true, art: <><path d="M8 1h14l-4 20H2z" fill="#7ec9dc" /><path d="M8 1h14l-1 3H7z" fill="#e8f4f8" /><path d="M22 1l1 3-3 19-2-1z" fill="#ccc" /><path d="M5 19L19 6" stroke="#c3ecf5" strokeWidth="3" opacity=".6" /></> },
];

export default function App() {
  return (
    <Page>
      <Global />
      <TitleBar>
        <h1>Grasshopper - m1*</h1>
        <WinButtons>
          <WinButton aria-label="Minimize"><svg width="11" height="11" stroke="#111"><path d="M0 5.500h11" /></svg></WinButton>
          <WinButton aria-label="Restore"><svg width="11" height="11" stroke="#111" fill="none"><path d="M.500 3.500h7v7h-7zM2.500 3V.500h8v7H8" /></svg></WinButton>
          <WinButton aria-label="Close"><svg width="11" height="11" stroke="#111"><path d="M.500.500l10 10M10.500.500l-10 10" /></svg></WinButton>
        </WinButtons>
      </TitleBar>

      <MenuBar>
        {["File", "Edit", "View", "Display", "Solution", "Help", "m1"].map((m) => <MenuButton key={m}>{m}</MenuButton>)}
      </MenuBar>

      <TabBar role="tablist">
        {["Params", "Maths", "Sets", "Vector", "Curve", "Surface", "Mesh", "Intersect", "Transform", "Display", "Honeybee", "Ladybug", "DIVA"].map((t) => (
          <Tab key={t} role="tab" aria-selected={t === "Honeybee"} $active={t === "Honeybee"}>{t}</Tab>
        ))}
      </TabBar>
      <Ribbon>{groups.map((g) => <RibbonGroup key={g.label} g={g} />)}</Ribbon>

      <ToolBar>
        <ToolGroup $gap={6}>
          <ToolButton aria-label="Open"><Glyph><path d="M5 13V2h9l4 4v8" fill="#fff" stroke="#777" /><path d="M2 11h8l2-3h10v14H2z" fill="#6cc04a" stroke="#2c6e1a" /><path d="M3 13h18v3H3z" fill="#a8e08c" /></Glyph></ToolButton>
          <ToolButton aria-label="Save"><Glyph><path d="M2 2h18l2 2v18H4l-2-2z" fill="#1f5fd0" stroke="#0c2c70" strokeWidth="1.500" /><path d="M6 3h12v9H6z" fill="#f4f4f4" stroke="#888" strokeWidth=".5" /><path d="M8 6h8M8 9h8" stroke="#bbb" /><path d="M7 15h11v7H7z" fill="#d8d8d8" /><path d="M9 16h3v5H9z" fill="#0c2c70" /></Glyph></ToolButton>
          <Divider />
          <ZoomBox>
            <select aria-label="Zoom" defaultValue="100%"><option>100%</option></select>
            <svg width="9" height="6" fill="none" stroke="#555"><path d="M.500.500l4 4 4-4" /></svg>
          </ZoomBox>
          <Drop aria-label="Zoom extents"><Glyph><path d="M3.500 9V3.500H9M15 3.500h5.500V9M20.500 15v5.500H15M9 20.500H3.500V15" stroke="#111" strokeWidth="3" /><path d="M10 10l4 4M14 10l-4 4" stroke="#111" strokeWidth="1.500" /></Glyph><Caret /></Drop>
          <Drop aria-label="Named views"><Glyph><EyeBlue /></Glyph><Caret /></Drop>
          <ToolButton aria-label="Sketch"><Glyph><path d="M1 9q6-2 4 4t3 9q5 2 6-2" stroke="#5a1a10" strokeWidth="1.500" /><path d="M22 2l1 8-10 11-5-5z" fill="#d8282c" stroke="#7a1010" /><path d="M8 15l5 5-6 2z" fill="#f0d0a0" stroke="#333" /><path d="M20 4L10 15" stroke="#f68a8a" strokeWidth="2" /></Glyph></ToolButton>
        </ToolGroup>
        <ToolGroup $gap={2}>
          <ToolButton $w={27} aria-label="No preview"><Glyph><path d="M8 2l11 1-3 12H4z" fill="#ddd" stroke="#888" /><ellipse cx="13" cy="6" rx="5" ry="3.500" fill="#f4f4f4" stroke="#888" /><ellipse cx="12" cy="17" rx="9" ry="6" fill="#bbb" /><ellipse cx="12" cy="15" rx="9" ry="4.500" fill="#222" /></Glyph></ToolButton>
          <ToolButton $w={27} aria-label="Wireframe preview"><Glyph><Cylinder a="#f8f8f8" b="#fff" /><ellipse cx="7" cy="16" rx="5" ry="3.500" transform="rotate(45 7 16)" stroke="#333" /></Glyph></ToolButton>
          <ToolButton $w={27} $active aria-label="Shaded preview"><Glyph><Cylinder a="#c01818" b="#e03030" /></Glyph></ToolButton>
          <Divider $m={6} />
          <ToolButton $w={27} aria-label="Selected preview"><Glyph><Cylinder a="#e4e4e4" b="#4fae2c" /><path d="M13 2l9 6q1 4-2 7l-3 3L6 7z" fill="#4fae2c" stroke="#1f5a10" /><ellipse cx="17" cy="8" rx="4" ry="3" transform="rotate(45 17 8)" fill="#1f6a10" /><path d="M2 4l18 18" stroke="#111" strokeWidth="1.500" /></Glyph></ToolButton>
          <ToolButton $w={27} aria-label="Document preview"><Glyph><circle cx="12" cy="12" r="10" fill="#eee" stroke="#555" /><path d="M12 2a10 10 0 0 0 0 20z" fill="#f08a1e" /><path d="M12 2a10 10 0 0 1 4 19z" fill="#fff" /><path d="M5 19q7 5 14 0" stroke="#333" strokeWidth="2" /></Glyph></ToolButton>
          <Divider />
          <Drop aria-label="Mesh quality"><Glyph><path d="M8 3l8-1 5 5 1 7-5 6-8 1-6-5-1-7z" fill="#5fa8f0" stroke="#173e80" strokeWidth="1.300" /><path d="M8 4l7-1 4 4-8 5-6-1z" fill="#b8dcfc" /></Glyph><Caret /></Drop>
        </ToolGroup>
      </ToolBar>

      <Canvas>
        <Tag $x={450} $y={93} $w={154}>Honeybee_Seasonal Schedule</Tag>
        <Tag $x={77} $y={274} $w={129}>Ladybug_Analysis Period</Tag>
        <Wires />
        <Component x={43} y={-7} w={205} inW={96} outH={233} bleed icon={icons.calA}
          inputs={["_tue", "_wed", "_thu", "_fri", "_sat", "holiday_", "coolDesignDay_", "heatDesignDay_", "------------", "_scheduleName", "_schedTypeLimits_", "_runIt"]}
          outputs={["----------", "schedule", "----------", "weekSched", "schedIDFText"]} version="VER 0.0.64" />
        <Component x={419} y={126} w={216} inW={107} outH={100} icon={icons.calS}
          inputs={["_scheduleName", "_schedTypeLimits_", "_baseWeekSched", "_seasonWeekSched1", "_analysisPeriod1"]}
          outputs={["readMe!", "schedule", "schedIDFText"]} version="VER 0.0.64" />
        <Component x={49} y={307} w={186} inW={72} outH={120} icon={PeriodIcon}
          inputs={["_fromMonth_", "_fromDay_", "_fromHour_", "_toMonth_", "_toDay_", "_toHour_"]}
          outputs={["readMe!", "analysisPeriod"]} version="VER 0.0.67" />
        <NamePanel><p>treebahar</p></NamePanel>

        <DataPanel>
          <PanelSheet>
            <PanelHead>{"{0;0}"}</PanelHead>
            {branches.map((b, i) => (
              <Branch key={i} $alt={i % 2 === 1}>
                <BranchIndex>{b.index}</BranchIndex>
                <Lines>{b.lines.map((l, k) => <p key={k}>{l}</p>)}</Lines>
              </Branch>
            ))}
          </PanelSheet>
          <PanelScroll />
        </DataPanel>

        <Compass width="56" height="46" viewBox="0 0 56 46" aria-hidden="true">
          <defs><radialGradient id="cg"><stop offset="0" stopColor="#f0f0f0" /><stop offset="1" stopColor="#c0c0c0" /></radialGradient></defs>
          <path d="M0 23l6-4 4 4-4 4z" fill="#000" />
          <path d="M20 4A21 21 0 0 0 24 42" stroke="#000" strokeWidth="4" fill="none" />
          <path d="M51 19h4v8h-4zM28 42h8l-2 4h-5z" fill="#000" />
          <circle cx="32" cy="22" r="19" fill="url(#cg)" stroke="#fff" strokeWidth="2" />
          <circle cx="32" cy="22" r="20.500" fill="none" stroke="#222" />
          <path d="M29 3h6l-3 6zM29 41h6l-3-6zM13 19v6l6-3zM51 19v6l-6-3z" fill="#fff" />
        </Compass>

        <Palette>
          <PaletteButton aria-label="Bake" $tone="#bcbcbc"><Glyph size={20}><path d="M12 3v10" stroke="#111" strokeWidth="4" /><path d="M6 10h12l-6 7z" fill="#111" /><path d="M1 19h22M3 19v4M7 19v4M11 19v4M15 19v4M19 19v4" stroke="#111" strokeWidth="2" /></Glyph></PaletteButton>
          <PaletteButton aria-label="Python"><Glyph size={20}><path d="M12 1q6 0 6 4v5q0 3-4 3H9q-4 0-4 4H4q-4-2-3-7 1-4 5-4h6V5H6q0-4 6-4z" fill="#3d7aab" /><path d="M12 23q-6 0-6-4v-4q0-3 4-3h5q4 0 4-5h2q3 3 2 7-1 4-5 4h-6v1h6q0 4-6 4z" fill="#ffd43b" /></Glyph></PaletteButton>
          <PaletteButton aria-label="Toggle" $tone="#d0d0d0"><Glyph size={20}><path d="M6 1h12v22H6z" fill="#111" /><path d="M8 3h8v8H8z" fill="#f0f0f0" /></Glyph></PaletteButton>
          <PaletteButton aria-label="Scribble" $tone="#fdc722"><Glyph size={20}><path d="M2 19q4 1 6-8 0 9 1 8 4-3 5-11-1 11 1 9 4-4 7-13-3 11-1 15" stroke="#a04e08" strokeWidth="2.500" /></Glyph></PaletteButton>
          <PaletteButton aria-label="North"><Glyph size={22}><path d="M8 1h7v22H8z" fill="#8be01e" stroke="#175a10" strokeWidth="1.500" /><path d="M9 10h9V7l6 5-6 5v-3H9z" fill="#d01818" stroke="#600" /><Txt x="3" y="16" s={11} font={UI}>N</Txt></Glyph></PaletteButton>
        </Palette>
      </Canvas>

      <StatusBar><span>...</span><span>0.9.0076</span></StatusBar>

      <TaskBar>
        <StartButton aria-label="Start"><svg width="16" height="16" fill="#fff"><path d="M0 2.500l7-1v6H0zM8 1.300L16 0v7.500H8zM0 8.500h7v6l-7-1zM8 8.500h8V16l-8-1.300z" /></svg></StartButton>
        <Search>
          <svg width="23" height="24" fill="none"><ellipse cx="11.500" cy="12" rx="9" ry="9.500" stroke="#111" strokeWidth="3" /></svg>
          <input type="text" aria-label="Search" placeholder="Type here to search" />
          <svg width="15" height="18" fill="none" stroke="#222"><rect x="5" y=".500" width="5" height="11" rx="1.500" /><path d="M2.500 8v3q0 3 5 3t5-3V8M7.500 14v3M4.500 17h6" /></svg>
        </Search>
        <StartButton aria-label="Task view"><svg width="18" height="18" fill="none" stroke="#fff" strokeWidth="1.300"><path d="M1.500 0v3h10V0M1.500 18v-3h10v3M1.500 5.500h10v7h-10zM15.500 0v4M15.500 9v9" /><path d="M14 5h3v3h-3z" fill="#fff" stroke="none" /></svg></StartButton>
        <Apps>
          {apps.map((a) => <AppButton key={a.name} aria-label={a.name} $line={a.line} $active={a.active}><Glyph>{a.art}</Glyph></AppButton>)}
        </Apps>
        <Tray>
          <TrayButton $w={48} aria-label="People"><svg width="16" height="16" fill="none" stroke="#fff" strokeWidth="1.300"><circle cx="5.500" cy="7" r="2.500" /><path d="M1 15q0-5 4.500-5T10 15" /><circle cx="11" cy="3.500" r="2.500" /><path d="M8.500 8q2-2 4.500-1 2 1 2 4" /></svg></TrayButton>
          <TrayButton $w={24} aria-label="Show hidden icons"><svg width="12" height="7" fill="none" stroke="#fff" strokeWidth="1.300"><path d="M.500 6.500L6 1l5.500 5.500" /></svg></TrayButton>
          <TrayButton $w={24} aria-label="Network"><svg width="16" height="14" fill="none" stroke="#fff"><path d="M4.500 2.500h11v7h-11zM10 10v3M7 13.500h6M.500.500h4v4h-4zM2.500 5v8" /></svg></TrayButton>
          <TrayButton $w={24} aria-label="Volume"><svg width="17" height="14" fill="none" stroke="#fff"><path d="M.500 5h2.500l4-4v12L3 9.500H.500zM9.500 5q1.500 2 0 4M11.500 3q3 4 0 8M13.500 1.500q4.500 5.500 0 11" /></svg></TrayButton>
          <TrayButton $w={34}>فا</TrayButton>
          <TrayButton $w={68}><span>8:27 PM</span><span>5/2/2019</span></TrayButton>
          <TrayButton $w={46} aria-label="Notifications"><svg width="26" height="26"><path d="M1 1h16v13H8l-4 4v-4H1z" fill="#fff" /><path d="M3 5h12M3 8h12M3 11h9" stroke="#333" /><circle cx="16" cy="17" r="7.500" fill="#333" stroke="#ccc" /><text x="16" y="21" fontSize="11" fill="#fff" textAnchor="middle" fontFamily="Open Sans">8</text></svg></TrayButton>
          <TrayButton $w={5} aria-label="Show desktop" />
        </Tray>
      </TaskBar>
    </Page>
  );
}
